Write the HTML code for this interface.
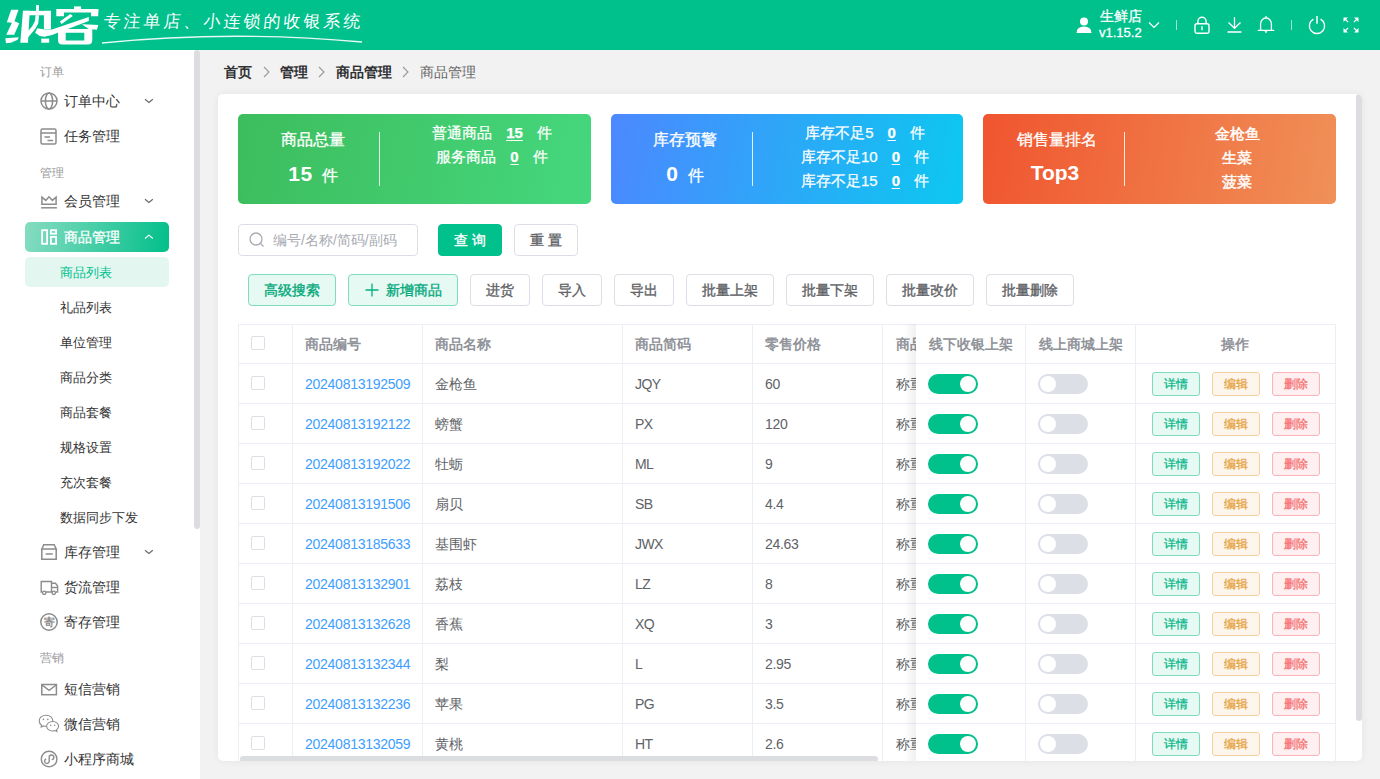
<!DOCTYPE html><html><head><meta charset="utf-8"><style>
*{margin:0;padding:0;box-sizing:border-box}
html,body{width:1380px;height:779px;overflow:hidden}
body{font-family:"Liberation Sans",sans-serif;background:#f2f2f2;position:relative;color:#333;font-size:14px}
.abs{position:absolute}
#hdr{position:absolute;left:0;top:0;width:1380px;height:50px;background:#00c08c}
#side{position:absolute;left:0;top:50px;width:200px;height:729px;background:#fff}
.sb-thumb{position:absolute;left:194px;top:50px;width:6px;height:479px;background:#dcdde0;border-radius:3px}
.grp{position:absolute;left:40px;font-size:12px;color:#999;line-height:14px}
.mi{position:absolute;left:64px;font-size:14px;color:#333;line-height:16px;white-space:nowrap}
.sub{position:absolute;left:60px;font-size:13px;color:#333;line-height:18px;white-space:nowrap}
.chev{position:absolute;left:145px;width:8px;height:5px}
#card{position:absolute;left:218px;top:94px;width:1144px;height:667px;background:#fff;border-radius:5px;box-shadow:0 0 8px rgba(0,0,0,.06);overflow:hidden}
.st{position:absolute;top:20px;height:90px;border-radius:5px;color:#fff}
.btn{position:absolute;height:32px;border:1px solid #dcdfe6;border-radius:4px;background:#fff;font-size:14px;color:#333;text-align:center;line-height:30px;font-weight:normal;-webkit-text-stroke:0.35px currentColor;white-space:nowrap}
.tb{position:absolute;left:20px;top:230px;width:1098px;height:440px;border-top:1px solid #ebeef5;border-left:1px solid #ebeef5}
.cell{position:absolute;font-size:14px;line-height:16px;white-space:nowrap}
</style></head><body>
<div id="hdr">
<svg class="abs" style="left:0;top:0" width="102" height="50" viewBox="0 0 102 50"><g fill="#fff"><polygon points="11.15,9.67 18.53,9.67 14.51,21.19 19.24,23.37 14.22,34.76 6.25,34.76 11.92,22.66 6.84,22.37"/><polygon points="5.25,38.3 18.82,37.3 17.64,39.78 10.85,42.73 6.01,43.32"/><polygon points="22.96,10.85 29.75,10.85 27.97,42.73 20.3,42.73"/><rect x="22.96" y="10.85" width="28.04" height="4.43"/><rect x="43.9" y="10.85" width="7.1" height="18.4"/><rect x="36.1" y="4.95" width="2.8" height="6.2"/><polygon points="35.5,15.28 39.1,15.28 38.2,23.5 35.5,28.5 27.97,37.6 27.97,31.2 32.2,26.2 35,20.9"/><rect x="41.26" y="38.6" width="7.94" height="4.13"/><polygon points="37.4,28.3 44.5,29.6 52,29.4 88.8,17.06 88.8,20.9 52,35.1 44.5,36.8 39.8,35.9 35.06,32.7"/><rect x="74" y="6.4" width="7.1" height="3.3"/><polygon points="56.3,9.1 98.5,9.1 98.2,16.2 91.1,16.2 91.1,12.6 64,12.6 64,16.2 56.3,16.2"/><polygon points="59.8,21.5 70.4,14.1 72.8,15.9 61.6,23.9"/><polygon points="81.7,24.2 89.3,24.6 98.2,24.9 97,29.8 88.8,28.9"/><path d="M58 28.9 H92.3 V40 Q92.3 44.5 87.8 44.5 H62.5 Q58 44.5 58 40Z M65.7 32.7 V40.4 H84.3 V32.7Z" fill-rule="evenodd"/></g></svg>
<div class="abs" style="left:102px;top:12px;font-size:17px;line-height:20px;color:#fff;letter-spacing:3px;transform:skewX(-6deg);transform-origin:0 100%">专注单店、小连锁的收银系统</div>
<svg class="abs" style="left:100px;top:32px" width="265" height="14"><path d="M2 11 Q130 -2 262 10" stroke="#fff" stroke-width="1.3" fill="none" opacity=".9"/></svg>
<svg class="abs" style="left:1076px;top:17px" width="16" height="16" viewBox="0 0 16 16"><circle cx="8" cy="4.5" r="4" fill="#fff"/><path d="M0.5 16 Q0.5 9.5 8 9.5 Q15.5 9.5 15.5 16Z" fill="#fff"/></svg>
<div class="abs" style="left:1100px;top:8px;font-size:14px;line-height:16px;color:#fff;-webkit-text-stroke:0.3px #fff">生鲜店</div>
<div class="abs" style="left:1099px;top:25px;font-size:13px;line-height:16px;color:#fff;-webkit-text-stroke:0.3px #fff">v1.15.2</div>
<svg class="abs" style="left:1148px;top:21px" width="12" height="8"><path d="M1 1.5 L6 6.5 L11 1.5" stroke="#fff" stroke-width="1.2" fill="none"/></svg>
<div class="abs" style="left:1176px;top:20px;width:1px;height:10px;background:rgba(255,255,255,.6)"></div>
<div class="abs" style="left:1291px;top:20px;width:1px;height:10px;background:rgba(255,255,255,.6)"></div>
<svg class="abs" style="left:1194px;top:16px" width="16" height="18" viewBox="0 0 16 18"><rect x="1" y="7.8" width="14" height="9.5" rx="2" stroke="#fff" stroke-width="1.4" fill="none"/><path d="M3.9 7.8 V5.3 A4.1 4.1 0 0 1 12.1 5.3 V7.8" stroke="#fff" stroke-width="1.4" fill="none"/><path d="M8 10.2 V14.3" stroke="#fff" stroke-width="1.4"/></svg>
<svg class="abs" style="left:1227px;top:16px" width="15" height="17" viewBox="0 0 15 17"><path d="M7.5 1 V12 M1.5 6.5 L7.5 12.3 L13.5 6.5 M0.5 16 H14.5" stroke="#fff" stroke-width="1.3" fill="none"/></svg>
<svg class="abs" style="left:1257px;top:15px" width="18" height="20" viewBox="0 0 18 20"><path d="M9 1 V3 M3.6 15.2 V8.8 A5.4 5.8 0 0 1 14.4 8.8 V15.2 M0.8 15.4 H17.2" stroke="#fff" stroke-width="1.3" fill="none"/><path d="M7.4 16.2 H10.6 L9 18.2Z" fill="#fff"/></svg>
<svg class="abs" style="left:1308px;top:15px" width="18" height="20" viewBox="0 0 18 20"><path d="M5.4 4.2 A7.6 7.6 0 1 0 12.6 4.2" stroke="#fff" stroke-width="1.4" fill="none"/><path d="M9 1 V8.7" stroke="#fff" stroke-width="1.5"/></svg>
<svg class="abs" style="left:1343px;top:17px" width="16" height="16" viewBox="0 0 16 16"><g fill="#fff"><path d="M0.5 0.5 H5 L3.2 2.3 L5.6 4.7 L4.7 5.6 L2.3 3.2 L0.5 5Z"/><path d="M15.5 0.5 H11 L12.8 2.3 L10.4 4.7 L11.3 5.6 L13.7 3.2 L15.5 5Z"/><path d="M0.5 15.5 H5 L3.2 13.7 L5.6 11.3 L4.7 10.4 L2.3 12.8 L0.5 11Z"/><path d="M15.5 15.5 H11 L12.8 13.7 L10.4 11.3 L11.3 10.4 L13.7 12.8 L15.5 11Z"/></g></svg>
</div>
<div id="side"></div>
<div class="sb-thumb"></div>
<div class="grp" style="top:65px">订单</div>
<svg class="abs" style="left:40px;top:92px" width="18" height="18" viewBox="0 0 18 18"><g stroke="#8c8c8c" stroke-width="1.5" fill="none"><circle cx="9" cy="9" r="8"/><ellipse cx="9" cy="9" rx="3.6" ry="8"/><path d="M1 9 H17"/></g></svg>
<div class="mi" style="top:93px;">订单中心</div>
<svg class="abs" style="left:144px;top:98px" width="10" height="6"><path d="M1 1.3 L4.9 4.5 L8.8 1.3" stroke="#666" stroke-width="1.1" fill="none"/></svg>
<svg class="abs" style="left:40px;top:128px" width="17" height="17" viewBox="0 0 17 17"><g stroke="#8c8c8c" stroke-width="1.5" fill="none"><rect x="1" y="1" width="15" height="15" rx="1.5"/><path d="M1 5 H16 M4.5 9 H10 M7.5 12.5 H13"/></g></svg>
<div class="mi" style="top:128px;">任务管理</div>
<div class="grp" style="top:166px">管理</div>
<svg class="abs" style="left:40px;top:194px" width="18" height="16" viewBox="0 0 18 16"><g stroke="#8c8c8c" stroke-width="1.5" fill="none"><path d="M1.9 10.3 V3.2 L5.8 6.4 L9 2.8 L12.4 6.4 L16.1 3.2 V10.3 Z"/><path d="M1.1 13.8 H16.9"/></g></svg>
<div class="mi" style="top:193px;">会员管理</div>
<svg class="abs" style="left:144px;top:198px" width="10" height="6"><path d="M1 1.3 L4.9 4.5 L8.8 1.3" stroke="#666" stroke-width="1.1" fill="none"/></svg>
<div class="abs" style="left:25px;top:222px;width:144px;height:30px;border-radius:5px;background:linear-gradient(100deg,#86dcc1 0%,#02bf8a 100%)"></div>
<svg class="abs" style="left:40px;top:228px" width="18" height="18" viewBox="0 0 18 18"><g stroke="#fff" stroke-width="1.8" fill="none"><rect x="2.15" y="2.2" width="4.95" height="13.6"/><rect x="10.9" y="2.2" width="5.2" height="3.5"/><rect x="10.9" y="8.9" width="5.2" height="6.9"/></g></svg>
<div class="mi" style="top:229px;color:#fff;-webkit-text-stroke:0.3px #fff">商品管理</div>
<svg class="abs" style="left:144px;top:234px" width="10" height="6"><path d="M1 4.5 L4.9 1.2 L8.8 4.5" stroke="#fff" stroke-width="1.1" fill="none"/></svg>
<div class="abs" style="left:25px;top:257px;width:144px;height:30px;border-radius:5px;background:#e3f7f0"></div>
<div class="sub" style="top:264px;color:#00c08c">商品列表</div>
<div class="sub" style="top:299px;">礼品列表</div>
<div class="sub" style="top:334px;">单位管理</div>
<div class="sub" style="top:369px;">商品分类</div>
<div class="sub" style="top:404px;">商品套餐</div>
<div class="sub" style="top:439px;">规格设置</div>
<div class="sub" style="top:474px;">充次套餐</div>
<div class="sub" style="top:509px;">数据同步下发</div>
<svg class="abs" style="left:40px;top:543px" width="18" height="18" viewBox="0 0 18 18"><g stroke="#8c8c8c" stroke-width="1.5" fill="none"><path d="M1.8 6 L3.8 1.8 H14.2 L16.2 6 Z"/><path d="M1.8 6 V16.3 H16.2 V6"/><path d="M5.7 11 H12.7"/></g></svg>
<div class="mi" style="top:544px;">库存管理</div>
<svg class="abs" style="left:144px;top:549px" width="10" height="6"><path d="M1 1.3 L4.9 4.5 L8.8 1.3" stroke="#666" stroke-width="1.1" fill="none"/></svg>
<svg class="abs" style="left:40px;top:580px" width="19" height="16" viewBox="0 0 19 16"><g stroke="#8c8c8c" stroke-width="1.4" fill="none"><path d="M2.5 12 H1.2 V1.5 H11.5 V12 H6"/><path d="M11.5 3.3 H15.5 L17.6 6 V12 H16"/><path d="M11.5 7.5 H17.5"/><circle cx="4.2" cy="12.8" r="1.7"/><circle cx="13.8" cy="12.8" r="1.7"/></g></svg>
<div class="mi" style="top:579px;">货流管理</div>
<svg class="abs" style="left:40px;top:613px" width="18" height="18" viewBox="0 0 18 18"><circle cx="9" cy="9" r="8.2" stroke="#8c8c8c" stroke-width="1.5" fill="none"/><text x="9" y="13" font-size="10.5" font-weight="bold" text-anchor="middle" fill="#8c8c8c">寄</text></svg>
<div class="mi" style="top:614px;">寄存管理</div>
<div class="grp" style="top:651px">营销</div>
<svg class="abs" style="left:40px;top:683px" width="18" height="13" viewBox="0 0 18 13"><g stroke="#8c8c8c" stroke-width="1.5" fill="none"><rect x="1.8" y="1.5" width="14.6" height="10.2"/><path d="M2 2 L9.1 7.3 L16.2 2"/></g></svg>
<div class="mi" style="top:681px;">短信营销</div>
<svg class="abs" style="left:38px;top:714px" width="22" height="19" viewBox="0 0 22 19"><g stroke="#8c8c8c" stroke-width="1.1" fill="#fff"><path d="M8 1.3 C12 1.3 14.8 3.8 14.8 6.8 C14.8 9.8 12 12.3 8 12.3 C7 12.3 6.2 12.2 5.4 11.9 L3.2 13 L3.6 11.2 C2 10.2 1.2 8.6 1.2 6.8 C1.2 3.8 4 1.3 8 1.3Z"/><path d="M14.6 7.5 C17.9 7.5 20.6 9.6 20.6 12.3 C20.6 13.8 19.8 15 18.6 15.8 L18.9 17.5 L17.1 16.6 C16.3 16.9 15.5 17 14.6 17 C11.3 17 8.6 14.9 8.6 12.3 C8.6 9.6 11.3 7.5 14.6 7.5Z"/></g><g fill="#8c8c8c"><circle cx="5.4" cy="5.4" r="0.8"/><circle cx="9.8" cy="5.4" r="0.8"/><circle cx="12.6" cy="11.2" r="0.75"/><circle cx="16.6" cy="11.2" r="0.75"/></g></svg>
<div class="mi" style="top:716px;">微信营销</div>
<svg class="abs" style="left:40px;top:750px" width="18" height="18" viewBox="0 0 18 18"><g stroke="#8c8c8c" stroke-width="1.4" fill="none"><circle cx="9.1" cy="9.1" r="7.8"/><path d="M6.2 8.9 A2.3 2.3 0 1 0 9.2 10.8 V7.4 A2.3 2.3 0 1 1 11.7 9.6"/></g></svg>
<div class="mi" style="top:751px;">小程序商城</div>
<div class="abs" style="left:224px;top:64px;font-size:14px;line-height:16px;font-weight:bold;color:#303133">首页</div>
<svg class="abs" style="left:263px;top:66px" width="7" height="12"><path d="M1 1 L6 6 L1 11" stroke="#999" stroke-width="1.1" fill="none"/></svg>
<div class="abs" style="left:280px;top:64px;font-size:14px;line-height:16px;font-weight:bold;color:#303133">管理</div>
<svg class="abs" style="left:318px;top:66px" width="7" height="12"><path d="M1 1 L6 6 L1 11" stroke="#999" stroke-width="1.1" fill="none"/></svg>
<div class="abs" style="left:336px;top:64px;font-size:14px;line-height:16px;font-weight:bold;color:#303133">商品管理</div>
<svg class="abs" style="left:402px;top:66px" width="7" height="12"><path d="M1 1 L6 6 L1 11" stroke="#999" stroke-width="1.1" fill="none"/></svg>
<div class="abs" style="left:420px;top:64px;font-size:14px;line-height:16px;color:#666">商品管理</div>
<div id="card">
<div class="st" style="left:20px;width:352.67px;background:linear-gradient(100deg,#3dbd5d,#45d77d)">
</div>
<div class="st" style="left:392.66999999999996px;width:352.67px;background:linear-gradient(100deg,#4c88ff,#0cc8f0)">
</div>
<div class="st" style="left:765.33px;width:352.67px;background:linear-gradient(100deg,#f0552f,#f09058)">
</div>
<div class="abs" style="left:-25px;top:35px;width:240px;text-align:center;white-space:nowrap;color:#fff;font-size:16px;line-height:21px;-webkit-text-stroke:0.3px #fff">商品总量</div>
<div class="abs" style="left:-25px;top:69px;width:240px;text-align:center;white-space:nowrap;color:#fff;line-height:22px"><b style="font-size:21px;letter-spacing:0.5px">15</b><span style="margin-left:9px;font-size:16px;-webkit-text-stroke:0.3px #fff">件</span></div>
<div class="abs" style="left:161px;top:38px;white-space:nowrap;color:#fff;width:1px;height:54px;background:rgba(255,255,255,.85)"></div>
<div class="abs" style="left:154px;top:30px;width:240px;text-align:center;white-space:nowrap;color:#fff;font-size:15px;line-height:18px;-webkit-text-stroke:0.25px #fff">普通商品<span style="margin-left:14px;text-decoration:underline;text-underline-offset:2px;font-weight:bold">15</span><span style="margin-left:14px">件</span></div>
<div class="abs" style="left:154px;top:54px;width:240px;text-align:center;white-space:nowrap;color:#fff;font-size:15px;line-height:18px;-webkit-text-stroke:0.25px #fff">服务商品<span style="margin-left:14px;text-decoration:underline;text-underline-offset:2px;font-weight:bold">0</span><span style="margin-left:14px">件</span></div>
<div class="abs" style="left:347px;top:35px;width:240px;text-align:center;white-space:nowrap;color:#fff;font-size:16px;line-height:21px;-webkit-text-stroke:0.3px #fff">库存预警</div>
<div class="abs" style="left:347px;top:69px;width:240px;text-align:center;white-space:nowrap;color:#fff;line-height:22px"><b style="font-size:21px">0</b><span style="margin-left:10px;font-size:16px;-webkit-text-stroke:0.3px #fff">件</span></div>
<div class="abs" style="left:534px;top:38px;white-space:nowrap;color:#fff;width:1px;height:54px;background:rgba(255,255,255,.85)"></div>
<div class="abs" style="left:527px;top:30px;width:240px;text-align:center;white-space:nowrap;color:#fff;font-size:15px;line-height:18px;-webkit-text-stroke:0.25px #fff">库存不足5<span style="margin-left:14px;text-decoration:underline;text-underline-offset:2px;font-weight:bold">0</span><span style="margin-left:14px">件</span></div>
<div class="abs" style="left:527px;top:54px;width:240px;text-align:center;white-space:nowrap;color:#fff;font-size:15px;line-height:18px;-webkit-text-stroke:0.25px #fff">库存不足10<span style="margin-left:14px;text-decoration:underline;text-underline-offset:2px;font-weight:bold">0</span><span style="margin-left:14px">件</span></div>
<div class="abs" style="left:527px;top:78px;width:240px;text-align:center;white-space:nowrap;color:#fff;font-size:15px;line-height:18px;-webkit-text-stroke:0.25px #fff">库存不足15<span style="margin-left:14px;text-decoration:underline;text-underline-offset:2px;font-weight:bold">0</span><span style="margin-left:14px">件</span></div>
<div class="abs" style="left:719px;top:35px;width:240px;text-align:center;white-space:nowrap;color:#fff;font-size:16px;line-height:21px;-webkit-text-stroke:0.3px #fff">销售量排名</div>
<div class="abs" style="left:717px;top:68px;width:240px;text-align:center;white-space:nowrap;color:#fff;line-height:22px"><b style="font-size:21px">Top3</b></div>
<div class="abs" style="left:906px;top:38px;white-space:nowrap;color:#fff;width:1px;height:54px;background:rgba(255,255,255,.85)"></div>
<div class="abs" style="left:899px;top:31px;width:240px;text-align:center;white-space:nowrap;color:#fff;font-size:15px;line-height:18px;-webkit-text-stroke:0.45px #fff">金枪鱼</div>
<div class="abs" style="left:899px;top:55px;width:240px;text-align:center;white-space:nowrap;color:#fff;font-size:15px;line-height:18px;-webkit-text-stroke:0.45px #fff">生菜</div>
<div class="abs" style="left:899px;top:79px;width:240px;text-align:center;white-space:nowrap;color:#fff;font-size:15px;line-height:18px;-webkit-text-stroke:0.45px #fff">菠菜</div>
<div class="abs" style="left:20px;top:130px;width:180px;height:32px;border:1px solid #dcdfe6;border-radius:4px"></div>
<svg class="abs" style="left:31px;top:138px" width="16" height="16" viewBox="0 0 16 16"><g stroke="#a8abb2" stroke-width="1.3" fill="none"><circle cx="7" cy="7" r="6"/><path d="M11.5 11.5 L14.5 14.5"/></g></svg>
<div class="abs" style="left:55px;top:138px;white-space:nowrap;color:#fff;color:#a8abb2;font-size:14px;line-height:16px">编号/名称/简码/副码</div>
<div class="btn" style="left:220px;top:130px;width:64px;background:#00c08c;border-color:#00c08c;color:#fff">查&nbsp;询</div>
<div class="btn" style="left:296px;top:130px;width:64px;color:#606266">重&nbsp;置</div>
<div class="btn" style="left:30px;top:180px;width:88px;background:#e6f9f3;border-color:#7fdcbf;color:#02a87a">高级搜索</div>
<div class="btn" style="left:130px;top:180px;width:110px;background:#e6f9f3;border-color:#7fdcbf;color:#02a87a"></div>
<svg class="abs" style="left:147px;top:189px" width="14" height="14"><path d="M7 0.5 V13.5 M0.5 7 H13.5" stroke="#02b07f" stroke-width="1.3"/></svg>
<div class="abs" style="left:168px;top:188px;white-space:nowrap;color:#fff;color:#02a87a;font-size:14px;line-height:16px;-webkit-text-stroke:0.35px #02a87a">新增商品</div>
<div class="btn" style="left:252px;top:180px;width:60px;color:#606266">进货</div>
<div class="btn" style="left:324px;top:180px;width:60px;color:#606266">导入</div>
<div class="btn" style="left:396px;top:180px;width:60px;color:#606266">导出</div>
<div class="btn" style="left:468px;top:180px;width:88px;color:#606266">批量上架</div>
<div class="btn" style="left:568px;top:180px;width:88px;color:#606266">批量下架</div>
<div class="btn" style="left:668px;top:180px;width:88px;color:#606266">批量改价</div>
<div class="btn" style="left:768px;top:180px;width:88px;color:#606266">批量删除</div>
<div class="abs" style="left:20px;top:230px;width:1098px;height:1px;background:#ebeef5"></div>
<div class="abs" style="left:20px;top:230px;width:1px;height:440px;background:#ebeef5"></div>
<div class="abs" style="left:20px;top:269px;width:1098px;height:1px;background:#ebeef5"></div>
<div class="abs" style="left:20px;top:309px;width:1098px;height:1px;background:#ebeef5"></div>
<div class="abs" style="left:20px;top:349px;width:1098px;height:1px;background:#ebeef5"></div>
<div class="abs" style="left:20px;top:389px;width:1098px;height:1px;background:#ebeef5"></div>
<div class="abs" style="left:20px;top:429px;width:1098px;height:1px;background:#ebeef5"></div>
<div class="abs" style="left:20px;top:469px;width:1098px;height:1px;background:#ebeef5"></div>
<div class="abs" style="left:20px;top:509px;width:1098px;height:1px;background:#ebeef5"></div>
<div class="abs" style="left:20px;top:549px;width:1098px;height:1px;background:#ebeef5"></div>
<div class="abs" style="left:20px;top:589px;width:1098px;height:1px;background:#ebeef5"></div>
<div class="abs" style="left:20px;top:629px;width:1098px;height:1px;background:#ebeef5"></div>
<div class="abs" style="left:20px;top:669px;width:1098px;height:1px;background:#ebeef5"></div>
<div class="abs" style="left:74px;top:230px;width:1px;height:440px;background:#ebeef5"></div>
<div class="abs" style="left:204px;top:230px;width:1px;height:440px;background:#ebeef5"></div>
<div class="abs" style="left:404px;top:230px;width:1px;height:440px;background:#ebeef5"></div>
<div class="abs" style="left:534px;top:230px;width:1px;height:440px;background:#ebeef5"></div>
<div class="abs" style="left:664px;top:230px;width:1px;height:440px;background:#ebeef5"></div>
<div class="abs" style="left:794px;top:230px;width:1px;height:440px;background:#ebeef5"></div>
<div class="abs" style="left:33px;top:242px;width:14px;height:14px;border:1px solid #dcdfe6;border-radius:2px;background:#fff"></div>
<div class="abs" style="left:87px;top:242px;white-space:nowrap;color:#fff;font-weight:bold;color:#909399;font-size:14px;line-height:16px">商品编号</div>
<div class="abs" style="left:217px;top:242px;white-space:nowrap;color:#fff;font-weight:bold;color:#909399;font-size:14px;line-height:16px">商品名称</div>
<div class="abs" style="left:417px;top:242px;white-space:nowrap;color:#fff;font-weight:bold;color:#909399;font-size:14px;line-height:16px">商品简码</div>
<div class="abs" style="left:547px;top:242px;white-space:nowrap;color:#fff;font-weight:bold;color:#909399;font-size:14px;line-height:16px">零售价格</div>
<div class="abs" style="left:678px;top:242px;white-space:nowrap;color:#fff;font-weight:bold;color:#909399;font-size:14px;line-height:16px">商品类型</div>
<div class="abs" style="left:33px;top:282px;width:14px;height:14px;border:1px solid #dcdfe6;border-radius:2px;background:#fff"></div>
<div class="abs" style="left:87px;top:282px;white-space:nowrap;color:#fff;color:#409eff;font-size:14px;line-height:16px;letter-spacing:-0.26px">20240813192509</div>
<div class="abs" style="left:217px;top:282px;white-space:nowrap;color:#fff;color:#606266;font-size:14px;line-height:16px">金枪鱼</div>
<div class="abs" style="left:417px;top:282px;white-space:nowrap;color:#fff;color:#606266;font-size:14px;line-height:16px;letter-spacing:-0.6px">JQY</div>
<div class="abs" style="left:547px;top:282px;white-space:nowrap;color:#fff;color:#606266;font-size:14px;line-height:16px;letter-spacing:-0.3px">60</div>
<div class="abs" style="left:678px;top:282px;white-space:nowrap;color:#fff;color:#606266;font-size:14px;line-height:16px">称重商品</div>
<div class="abs" style="left:33px;top:322px;width:14px;height:14px;border:1px solid #dcdfe6;border-radius:2px;background:#fff"></div>
<div class="abs" style="left:87px;top:322px;white-space:nowrap;color:#fff;color:#409eff;font-size:14px;line-height:16px;letter-spacing:-0.26px">20240813192122</div>
<div class="abs" style="left:217px;top:322px;white-space:nowrap;color:#fff;color:#606266;font-size:14px;line-height:16px">螃蟹</div>
<div class="abs" style="left:417px;top:322px;white-space:nowrap;color:#fff;color:#606266;font-size:14px;line-height:16px;letter-spacing:-0.6px">PX</div>
<div class="abs" style="left:547px;top:322px;white-space:nowrap;color:#fff;color:#606266;font-size:14px;line-height:16px;letter-spacing:-0.3px">120</div>
<div class="abs" style="left:678px;top:322px;white-space:nowrap;color:#fff;color:#606266;font-size:14px;line-height:16px">称重商品</div>
<div class="abs" style="left:33px;top:362px;width:14px;height:14px;border:1px solid #dcdfe6;border-radius:2px;background:#fff"></div>
<div class="abs" style="left:87px;top:362px;white-space:nowrap;color:#fff;color:#409eff;font-size:14px;line-height:16px;letter-spacing:-0.26px">20240813192022</div>
<div class="abs" style="left:217px;top:362px;white-space:nowrap;color:#fff;color:#606266;font-size:14px;line-height:16px">牡蛎</div>
<div class="abs" style="left:417px;top:362px;white-space:nowrap;color:#fff;color:#606266;font-size:14px;line-height:16px;letter-spacing:-0.6px">ML</div>
<div class="abs" style="left:547px;top:362px;white-space:nowrap;color:#fff;color:#606266;font-size:14px;line-height:16px;letter-spacing:-0.3px">9</div>
<div class="abs" style="left:678px;top:362px;white-space:nowrap;color:#fff;color:#606266;font-size:14px;line-height:16px">称重商品</div>
<div class="abs" style="left:33px;top:402px;width:14px;height:14px;border:1px solid #dcdfe6;border-radius:2px;background:#fff"></div>
<div class="abs" style="left:87px;top:402px;white-space:nowrap;color:#fff;color:#409eff;font-size:14px;line-height:16px;letter-spacing:-0.26px">20240813191506</div>
<div class="abs" style="left:217px;top:402px;white-space:nowrap;color:#fff;color:#606266;font-size:14px;line-height:16px">扇贝</div>
<div class="abs" style="left:417px;top:402px;white-space:nowrap;color:#fff;color:#606266;font-size:14px;line-height:16px;letter-spacing:-0.6px">SB</div>
<div class="abs" style="left:547px;top:402px;white-space:nowrap;color:#fff;color:#606266;font-size:14px;line-height:16px;letter-spacing:-0.3px">4.4</div>
<div class="abs" style="left:678px;top:402px;white-space:nowrap;color:#fff;color:#606266;font-size:14px;line-height:16px">称重商品</div>
<div class="abs" style="left:33px;top:442px;width:14px;height:14px;border:1px solid #dcdfe6;border-radius:2px;background:#fff"></div>
<div class="abs" style="left:87px;top:442px;white-space:nowrap;color:#fff;color:#409eff;font-size:14px;line-height:16px;letter-spacing:-0.26px">20240813185633</div>
<div class="abs" style="left:217px;top:442px;white-space:nowrap;color:#fff;color:#606266;font-size:14px;line-height:16px">基围虾</div>
<div class="abs" style="left:417px;top:442px;white-space:nowrap;color:#fff;color:#606266;font-size:14px;line-height:16px;letter-spacing:-0.6px">JWX</div>
<div class="abs" style="left:547px;top:442px;white-space:nowrap;color:#fff;color:#606266;font-size:14px;line-height:16px;letter-spacing:-0.3px">24.63</div>
<div class="abs" style="left:678px;top:442px;white-space:nowrap;color:#fff;color:#606266;font-size:14px;line-height:16px">称重商品</div>
<div class="abs" style="left:33px;top:482px;width:14px;height:14px;border:1px solid #dcdfe6;border-radius:2px;background:#fff"></div>
<div class="abs" style="left:87px;top:482px;white-space:nowrap;color:#fff;color:#409eff;font-size:14px;line-height:16px;letter-spacing:-0.26px">20240813132901</div>
<div class="abs" style="left:217px;top:482px;white-space:nowrap;color:#fff;color:#606266;font-size:14px;line-height:16px">荔枝</div>
<div class="abs" style="left:417px;top:482px;white-space:nowrap;color:#fff;color:#606266;font-size:14px;line-height:16px;letter-spacing:-0.6px">LZ</div>
<div class="abs" style="left:547px;top:482px;white-space:nowrap;color:#fff;color:#606266;font-size:14px;line-height:16px;letter-spacing:-0.3px">8</div>
<div class="abs" style="left:678px;top:482px;white-space:nowrap;color:#fff;color:#606266;font-size:14px;line-height:16px">称重商品</div>
<div class="abs" style="left:33px;top:522px;width:14px;height:14px;border:1px solid #dcdfe6;border-radius:2px;background:#fff"></div>
<div class="abs" style="left:87px;top:522px;white-space:nowrap;color:#fff;color:#409eff;font-size:14px;line-height:16px;letter-spacing:-0.26px">20240813132628</div>
<div class="abs" style="left:217px;top:522px;white-space:nowrap;color:#fff;color:#606266;font-size:14px;line-height:16px">香蕉</div>
<div class="abs" style="left:417px;top:522px;white-space:nowrap;color:#fff;color:#606266;font-size:14px;line-height:16px;letter-spacing:-0.6px">XQ</div>
<div class="abs" style="left:547px;top:522px;white-space:nowrap;color:#fff;color:#606266;font-size:14px;line-height:16px;letter-spacing:-0.3px">3</div>
<div class="abs" style="left:678px;top:522px;white-space:nowrap;color:#fff;color:#606266;font-size:14px;line-height:16px">称重商品</div>
<div class="abs" style="left:33px;top:562px;width:14px;height:14px;border:1px solid #dcdfe6;border-radius:2px;background:#fff"></div>
<div class="abs" style="left:87px;top:562px;white-space:nowrap;color:#fff;color:#409eff;font-size:14px;line-height:16px;letter-spacing:-0.26px">20240813132344</div>
<div class="abs" style="left:217px;top:562px;white-space:nowrap;color:#fff;color:#606266;font-size:14px;line-height:16px">梨</div>
<div class="abs" style="left:417px;top:562px;white-space:nowrap;color:#fff;color:#606266;font-size:14px;line-height:16px;letter-spacing:-0.6px">L</div>
<div class="abs" style="left:547px;top:562px;white-space:nowrap;color:#fff;color:#606266;font-size:14px;line-height:16px;letter-spacing:-0.3px">2.95</div>
<div class="abs" style="left:678px;top:562px;white-space:nowrap;color:#fff;color:#606266;font-size:14px;line-height:16px">称重商品</div>
<div class="abs" style="left:33px;top:602px;width:14px;height:14px;border:1px solid #dcdfe6;border-radius:2px;background:#fff"></div>
<div class="abs" style="left:87px;top:602px;white-space:nowrap;color:#fff;color:#409eff;font-size:14px;line-height:16px;letter-spacing:-0.26px">20240813132236</div>
<div class="abs" style="left:217px;top:602px;white-space:nowrap;color:#fff;color:#606266;font-size:14px;line-height:16px">苹果</div>
<div class="abs" style="left:417px;top:602px;white-space:nowrap;color:#fff;color:#606266;font-size:14px;line-height:16px;letter-spacing:-0.6px">PG</div>
<div class="abs" style="left:547px;top:602px;white-space:nowrap;color:#fff;color:#606266;font-size:14px;line-height:16px;letter-spacing:-0.3px">3.5</div>
<div class="abs" style="left:678px;top:602px;white-space:nowrap;color:#fff;color:#606266;font-size:14px;line-height:16px">称重商品</div>
<div class="abs" style="left:33px;top:642px;width:14px;height:14px;border:1px solid #dcdfe6;border-radius:2px;background:#fff"></div>
<div class="abs" style="left:87px;top:642px;white-space:nowrap;color:#fff;color:#409eff;font-size:14px;line-height:16px;letter-spacing:-0.26px">20240813132059</div>
<div class="abs" style="left:217px;top:642px;white-space:nowrap;color:#fff;color:#606266;font-size:14px;line-height:16px">黄桃</div>
<div class="abs" style="left:417px;top:642px;white-space:nowrap;color:#fff;color:#606266;font-size:14px;line-height:16px;letter-spacing:-0.6px">HT</div>
<div class="abs" style="left:547px;top:642px;white-space:nowrap;color:#fff;color:#606266;font-size:14px;line-height:16px;letter-spacing:-0.3px">2.6</div>
<div class="abs" style="left:678px;top:642px;white-space:nowrap;color:#fff;color:#606266;font-size:14px;line-height:16px">称重商品</div>
<div class="abs" style="left:686px;top:230px;width:12px;height:440px;background:linear-gradient(to right,rgba(0,0,0,0),rgba(0,0,0,.06))"></div>
<div class="abs" style="left:698px;top:230px;width:420px;height:440px;background:#fff;border-top:1px solid #ebeef5"></div>
<div class="abs" style="left:698px;top:269px;width:420px;height:1px;background:#ebeef5"></div>
<div class="abs" style="left:698px;top:309px;width:420px;height:1px;background:#ebeef5"></div>
<div class="abs" style="left:698px;top:349px;width:420px;height:1px;background:#ebeef5"></div>
<div class="abs" style="left:698px;top:389px;width:420px;height:1px;background:#ebeef5"></div>
<div class="abs" style="left:698px;top:429px;width:420px;height:1px;background:#ebeef5"></div>
<div class="abs" style="left:698px;top:469px;width:420px;height:1px;background:#ebeef5"></div>
<div class="abs" style="left:698px;top:509px;width:420px;height:1px;background:#ebeef5"></div>
<div class="abs" style="left:698px;top:549px;width:420px;height:1px;background:#ebeef5"></div>
<div class="abs" style="left:698px;top:589px;width:420px;height:1px;background:#ebeef5"></div>
<div class="abs" style="left:698px;top:629px;width:420px;height:1px;background:#ebeef5"></div>
<div class="abs" style="left:698px;top:669px;width:420px;height:1px;background:#ebeef5"></div>
<div class="abs" style="left:807px;top:230px;width:1px;height:440px;background:#ebeef5"></div>
<div class="abs" style="left:917px;top:230px;width:1px;height:440px;background:#ebeef5"></div>
<div class="abs" style="left:1117px;top:230px;width:1px;height:440px;background:#ebeef5"></div>
<div class="abs" style="left:711px;top:242px;white-space:nowrap;color:#fff;font-weight:bold;color:#909399;font-size:14px;line-height:16px">线下收银上架</div>
<div class="abs" style="left:821px;top:242px;white-space:nowrap;color:#fff;font-weight:bold;color:#909399;font-size:14px;line-height:16px">线上商城上架</div>
<div class="abs" style="left:967px;top:242px;width:100px;text-align:center;white-space:nowrap;color:#fff;font-weight:bold;color:#909399;font-size:14px;line-height:16px">操作</div>
<div class="abs" style="left:710px;top:280px;width:50px;height:20px;border-radius:10px;background:#00c08c"><div class="abs" style="left:32px;top:2px;width:16px;height:16px;border-radius:8px;background:#fff"></div></div>
<div class="abs" style="left:820px;top:280px;width:50px;height:20px;border-radius:10px;background:#dcdfe6"><div class="abs" style="left:2px;top:2px;width:16px;height:16px;border-radius:8px;background:#fff"></div></div>
<div class="abs" style="left:934px;top:278px;width:48px;height:24px;border:1px solid #7fdcbf;background:#e6f9f3;color:#00b585;border-radius:3px;font-size:12px;line-height:22px;text-align:center;-webkit-text-stroke:0.25px currentColor">详情</div>
<div class="abs" style="left:994px;top:278px;width:48px;height:24px;border:1px solid #f3d19e;background:#fdf6ec;color:#e6a23c;border-radius:3px;font-size:12px;line-height:22px;text-align:center;-webkit-text-stroke:0.25px currentColor">编辑</div>
<div class="abs" style="left:1054px;top:278px;width:48px;height:24px;border:1px solid #fab6b6;background:#fef0f0;color:#f56c6c;border-radius:3px;font-size:12px;line-height:22px;text-align:center;-webkit-text-stroke:0.25px currentColor">删除</div>
<div class="abs" style="left:710px;top:320px;width:50px;height:20px;border-radius:10px;background:#00c08c"><div class="abs" style="left:32px;top:2px;width:16px;height:16px;border-radius:8px;background:#fff"></div></div>
<div class="abs" style="left:820px;top:320px;width:50px;height:20px;border-radius:10px;background:#dcdfe6"><div class="abs" style="left:2px;top:2px;width:16px;height:16px;border-radius:8px;background:#fff"></div></div>
<div class="abs" style="left:934px;top:318px;width:48px;height:24px;border:1px solid #7fdcbf;background:#e6f9f3;color:#00b585;border-radius:3px;font-size:12px;line-height:22px;text-align:center;-webkit-text-stroke:0.25px currentColor">详情</div>
<div class="abs" style="left:994px;top:318px;width:48px;height:24px;border:1px solid #f3d19e;background:#fdf6ec;color:#e6a23c;border-radius:3px;font-size:12px;line-height:22px;text-align:center;-webkit-text-stroke:0.25px currentColor">编辑</div>
<div class="abs" style="left:1054px;top:318px;width:48px;height:24px;border:1px solid #fab6b6;background:#fef0f0;color:#f56c6c;border-radius:3px;font-size:12px;line-height:22px;text-align:center;-webkit-text-stroke:0.25px currentColor">删除</div>
<div class="abs" style="left:710px;top:360px;width:50px;height:20px;border-radius:10px;background:#00c08c"><div class="abs" style="left:32px;top:2px;width:16px;height:16px;border-radius:8px;background:#fff"></div></div>
<div class="abs" style="left:820px;top:360px;width:50px;height:20px;border-radius:10px;background:#dcdfe6"><div class="abs" style="left:2px;top:2px;width:16px;height:16px;border-radius:8px;background:#fff"></div></div>
<div class="abs" style="left:934px;top:358px;width:48px;height:24px;border:1px solid #7fdcbf;background:#e6f9f3;color:#00b585;border-radius:3px;font-size:12px;line-height:22px;text-align:center;-webkit-text-stroke:0.25px currentColor">详情</div>
<div class="abs" style="left:994px;top:358px;width:48px;height:24px;border:1px solid #f3d19e;background:#fdf6ec;color:#e6a23c;border-radius:3px;font-size:12px;line-height:22px;text-align:center;-webkit-text-stroke:0.25px currentColor">编辑</div>
<div class="abs" style="left:1054px;top:358px;width:48px;height:24px;border:1px solid #fab6b6;background:#fef0f0;color:#f56c6c;border-radius:3px;font-size:12px;line-height:22px;text-align:center;-webkit-text-stroke:0.25px currentColor">删除</div>
<div class="abs" style="left:710px;top:400px;width:50px;height:20px;border-radius:10px;background:#00c08c"><div class="abs" style="left:32px;top:2px;width:16px;height:16px;border-radius:8px;background:#fff"></div></div>
<div class="abs" style="left:820px;top:400px;width:50px;height:20px;border-radius:10px;background:#dcdfe6"><div class="abs" style="left:2px;top:2px;width:16px;height:16px;border-radius:8px;background:#fff"></div></div>
<div class="abs" style="left:934px;top:398px;width:48px;height:24px;border:1px solid #7fdcbf;background:#e6f9f3;color:#00b585;border-radius:3px;font-size:12px;line-height:22px;text-align:center;-webkit-text-stroke:0.25px currentColor">详情</div>
<div class="abs" style="left:994px;top:398px;width:48px;height:24px;border:1px solid #f3d19e;background:#fdf6ec;color:#e6a23c;border-radius:3px;font-size:12px;line-height:22px;text-align:center;-webkit-text-stroke:0.25px currentColor">编辑</div>
<div class="abs" style="left:1054px;top:398px;width:48px;height:24px;border:1px solid #fab6b6;background:#fef0f0;color:#f56c6c;border-radius:3px;font-size:12px;line-height:22px;text-align:center;-webkit-text-stroke:0.25px currentColor">删除</div>
<div class="abs" style="left:710px;top:440px;width:50px;height:20px;border-radius:10px;background:#00c08c"><div class="abs" style="left:32px;top:2px;width:16px;height:16px;border-radius:8px;background:#fff"></div></div>
<div class="abs" style="left:820px;top:440px;width:50px;height:20px;border-radius:10px;background:#dcdfe6"><div class="abs" style="left:2px;top:2px;width:16px;height:16px;border-radius:8px;background:#fff"></div></div>
<div class="abs" style="left:934px;top:438px;width:48px;height:24px;border:1px solid #7fdcbf;background:#e6f9f3;color:#00b585;border-radius:3px;font-size:12px;line-height:22px;text-align:center;-webkit-text-stroke:0.25px currentColor">详情</div>
<div class="abs" style="left:994px;top:438px;width:48px;height:24px;border:1px solid #f3d19e;background:#fdf6ec;color:#e6a23c;border-radius:3px;font-size:12px;line-height:22px;text-align:center;-webkit-text-stroke:0.25px currentColor">编辑</div>
<div class="abs" style="left:1054px;top:438px;width:48px;height:24px;border:1px solid #fab6b6;background:#fef0f0;color:#f56c6c;border-radius:3px;font-size:12px;line-height:22px;text-align:center;-webkit-text-stroke:0.25px currentColor">删除</div>
<div class="abs" style="left:710px;top:480px;width:50px;height:20px;border-radius:10px;background:#00c08c"><div class="abs" style="left:32px;top:2px;width:16px;height:16px;border-radius:8px;background:#fff"></div></div>
<div class="abs" style="left:820px;top:480px;width:50px;height:20px;border-radius:10px;background:#dcdfe6"><div class="abs" style="left:2px;top:2px;width:16px;height:16px;border-radius:8px;background:#fff"></div></div>
<div class="abs" style="left:934px;top:478px;width:48px;height:24px;border:1px solid #7fdcbf;background:#e6f9f3;color:#00b585;border-radius:3px;font-size:12px;line-height:22px;text-align:center;-webkit-text-stroke:0.25px currentColor">详情</div>
<div class="abs" style="left:994px;top:478px;width:48px;height:24px;border:1px solid #f3d19e;background:#fdf6ec;color:#e6a23c;border-radius:3px;font-size:12px;line-height:22px;text-align:center;-webkit-text-stroke:0.25px currentColor">编辑</div>
<div class="abs" style="left:1054px;top:478px;width:48px;height:24px;border:1px solid #fab6b6;background:#fef0f0;color:#f56c6c;border-radius:3px;font-size:12px;line-height:22px;text-align:center;-webkit-text-stroke:0.25px currentColor">删除</div>
<div class="abs" style="left:710px;top:520px;width:50px;height:20px;border-radius:10px;background:#00c08c"><div class="abs" style="left:32px;top:2px;width:16px;height:16px;border-radius:8px;background:#fff"></div></div>
<div class="abs" style="left:820px;top:520px;width:50px;height:20px;border-radius:10px;background:#dcdfe6"><div class="abs" style="left:2px;top:2px;width:16px;height:16px;border-radius:8px;background:#fff"></div></div>
<div class="abs" style="left:934px;top:518px;width:48px;height:24px;border:1px solid #7fdcbf;background:#e6f9f3;color:#00b585;border-radius:3px;font-size:12px;line-height:22px;text-align:center;-webkit-text-stroke:0.25px currentColor">详情</div>
<div class="abs" style="left:994px;top:518px;width:48px;height:24px;border:1px solid #f3d19e;background:#fdf6ec;color:#e6a23c;border-radius:3px;font-size:12px;line-height:22px;text-align:center;-webkit-text-stroke:0.25px currentColor">编辑</div>
<div class="abs" style="left:1054px;top:518px;width:48px;height:24px;border:1px solid #fab6b6;background:#fef0f0;color:#f56c6c;border-radius:3px;font-size:12px;line-height:22px;text-align:center;-webkit-text-stroke:0.25px currentColor">删除</div>
<div class="abs" style="left:710px;top:560px;width:50px;height:20px;border-radius:10px;background:#00c08c"><div class="abs" style="left:32px;top:2px;width:16px;height:16px;border-radius:8px;background:#fff"></div></div>
<div class="abs" style="left:820px;top:560px;width:50px;height:20px;border-radius:10px;background:#dcdfe6"><div class="abs" style="left:2px;top:2px;width:16px;height:16px;border-radius:8px;background:#fff"></div></div>
<div class="abs" style="left:934px;top:558px;width:48px;height:24px;border:1px solid #7fdcbf;background:#e6f9f3;color:#00b585;border-radius:3px;font-size:12px;line-height:22px;text-align:center;-webkit-text-stroke:0.25px currentColor">详情</div>
<div class="abs" style="left:994px;top:558px;width:48px;height:24px;border:1px solid #f3d19e;background:#fdf6ec;color:#e6a23c;border-radius:3px;font-size:12px;line-height:22px;text-align:center;-webkit-text-stroke:0.25px currentColor">编辑</div>
<div class="abs" style="left:1054px;top:558px;width:48px;height:24px;border:1px solid #fab6b6;background:#fef0f0;color:#f56c6c;border-radius:3px;font-size:12px;line-height:22px;text-align:center;-webkit-text-stroke:0.25px currentColor">删除</div>
<div class="abs" style="left:710px;top:600px;width:50px;height:20px;border-radius:10px;background:#00c08c"><div class="abs" style="left:32px;top:2px;width:16px;height:16px;border-radius:8px;background:#fff"></div></div>
<div class="abs" style="left:820px;top:600px;width:50px;height:20px;border-radius:10px;background:#dcdfe6"><div class="abs" style="left:2px;top:2px;width:16px;height:16px;border-radius:8px;background:#fff"></div></div>
<div class="abs" style="left:934px;top:598px;width:48px;height:24px;border:1px solid #7fdcbf;background:#e6f9f3;color:#00b585;border-radius:3px;font-size:12px;line-height:22px;text-align:center;-webkit-text-stroke:0.25px currentColor">详情</div>
<div class="abs" style="left:994px;top:598px;width:48px;height:24px;border:1px solid #f3d19e;background:#fdf6ec;color:#e6a23c;border-radius:3px;font-size:12px;line-height:22px;text-align:center;-webkit-text-stroke:0.25px currentColor">编辑</div>
<div class="abs" style="left:1054px;top:598px;width:48px;height:24px;border:1px solid #fab6b6;background:#fef0f0;color:#f56c6c;border-radius:3px;font-size:12px;line-height:22px;text-align:center;-webkit-text-stroke:0.25px currentColor">删除</div>
<div class="abs" style="left:710px;top:640px;width:50px;height:20px;border-radius:10px;background:#00c08c"><div class="abs" style="left:32px;top:2px;width:16px;height:16px;border-radius:8px;background:#fff"></div></div>
<div class="abs" style="left:820px;top:640px;width:50px;height:20px;border-radius:10px;background:#dcdfe6"><div class="abs" style="left:2px;top:2px;width:16px;height:16px;border-radius:8px;background:#fff"></div></div>
<div class="abs" style="left:934px;top:638px;width:48px;height:24px;border:1px solid #7fdcbf;background:#e6f9f3;color:#00b585;border-radius:3px;font-size:12px;line-height:22px;text-align:center;-webkit-text-stroke:0.25px currentColor">详情</div>
<div class="abs" style="left:994px;top:638px;width:48px;height:24px;border:1px solid #f3d19e;background:#fdf6ec;color:#e6a23c;border-radius:3px;font-size:12px;line-height:22px;text-align:center;-webkit-text-stroke:0.25px currentColor">编辑</div>
<div class="abs" style="left:1054px;top:638px;width:48px;height:24px;border:1px solid #fab6b6;background:#fef0f0;color:#f56c6c;border-radius:3px;font-size:12px;line-height:22px;text-align:center;-webkit-text-stroke:0.25px currentColor">删除</div>
<div class="abs" style="left:1138px;top:0;width:6px;height:627px;background:#dcdde0;border-radius:3px"></div>
<div class="abs" style="left:22px;top:662px;width:638px;height:6px;background:#dcdde0;border-radius:3px"></div>
</div>
</body></html>
